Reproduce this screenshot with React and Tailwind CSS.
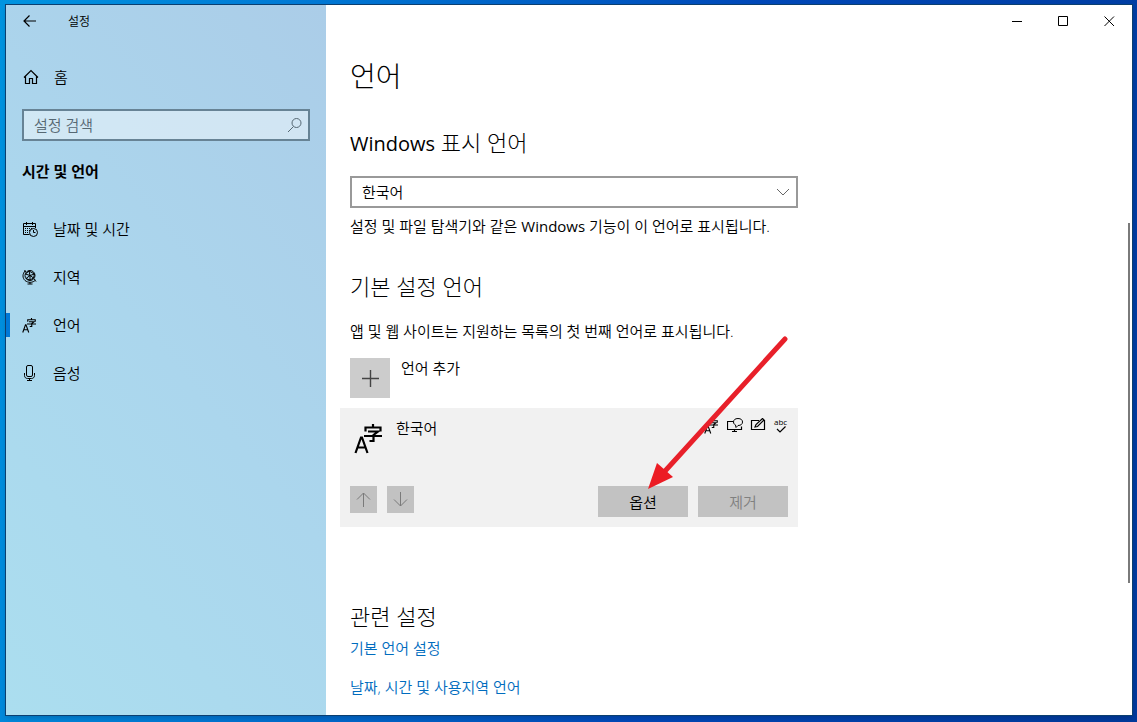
function Icon({ size, className = "", children }) {
  return (
    <svg
      width={size}
      height={size}
      viewBox={`0 0 ${size} ${size}`}
      fill="none"
      stroke="currentColor"
      strokeWidth="1"
      aria-hidden="true"
      className={`shrink-0 ${className}`}
    >
      {children}
    </svg>
  );
}

function LanguageIcon({ size, className = "" }) {
  return (
    <svg
      width={size}
      height={size}
      viewBox="0 0 32 32"
      fill="none"
      stroke="currentColor"
      strokeWidth="2.2"
      aria-hidden="true"
      className={`shrink-0 ${className}`}
    >
      <path d="M1.5 31L7 15.5H8L13.5 31M3.5 25.5H11.5" />
      <path d="M19 2V5.5M11.5 9.5V5.5H26.5V9.5M14 9.5H24L19.5 13V19H15.5M10 14H28" />
    </svg>
  );
}

function CalendarIcon() {
  return (
    <Icon size={16}>
      <path d="M7.5 13.5H1.5V2.5H13.5V7M1.5 5.5H13.5M4.5 1V4M10.5 1V4" />
      <path d="M3 7.5H11M3 9.5H8M3 11.5H7" strokeDasharray="1 1" />
      <circle cx="11.5" cy="11.5" r="4" />
      <path d="M11.5 9V11.5H13.5" />
    </Icon>
  );
}

function GlobeIcon() {
  return (
    <Icon size={16}>
      <circle cx="8" cy="6.5" r="5" />
      <path d="M3.5 1.5C0 5 .5 9 3 11.5C6 14 11 14 13.5 11M2 1.5L4 3M12 10L14 12.5M3.5 5L7 2L12.5 5L11.5 9L8 11L4 9.5L8 6.5L12.5 5M7 2L8 6.5L11.5 9M3.5 5L8 6.5L8 11M8 13V15M5.5 15H10.5" />
    </Icon>
  );
}

function MicIcon() {
  return (
    <Icon size={16}>
      <rect x="4.5" y=".5" width="6" height="11" rx="1.5" />
      <path d="M2.5 8V10.5C2.5 12.5 4 13.5 5.5 13.5H9.5C11 13.5 12.5 12.5 12.5 10.5V8M7.5 13.5V15.5M5 15.5H10" />
    </Icon>
  );
}

const navItems = [
  { label: "날짜 및 시간", icon: <CalendarIcon /> },
  { label: "지역", icon: <GlobeIcon /> },
  { label: "언어", icon: <LanguageIcon size={16} />, active: true },
  { label: "음성", icon: <MicIcon /> },
];

function Sidebar() {
  return (
    <aside className="flex w-80 shrink-0 flex-col bg-linear-[50deg,#abdeef_0%,#abd6ed_50%,#abcde8_100%]">
      <div className="flex h-8 items-center gap-[30px] pl-4">
        <button type="button" aria-label="뒤로" className="flex">
          <Icon size={16}>
            <path d="M14 8H2.5M7.5 2.5L2 8L7.5 13.5" strokeWidth="1.2" />
          </Icon>
        </button>
        <span className="pt-px text-xs">설정</span>
      </div>

      <a href="#home" className="mt-4 flex h-12 items-center gap-[15px] pl-[17px]">
        <Icon size={16}>
          <path d="M1 8.5L8 1.5L15 8.5M2.5 7.5V14.5H6.5V9.5H9.5V14.5H13.5V7.5" strokeWidth="1.2" />
        </Icon>
        <span>홈</span>
      </a>

      <div className="mx-4 mt-2 flex h-8 items-center border-2 border-[#678395] bg-white/45 pr-[5px] pl-[10px]">
        <input
          type="search"
          aria-label="설정 검색"
          placeholder="설정 검색"
          className="min-w-0 flex-1 bg-transparent outline-none placeholder:text-[#566873]"
        />
        <Icon size={16} className="text-[#566873]">
          <circle cx="9.5" cy="6" r="4.5" />
          <path d="M6.5 9.5L1 15" />
        </Icon>
      </div>

      <h2 className="mt-5 pl-4 font-bold">시간 및 언어</h2>

      <nav className="mt-6 flex flex-col">
        {navItems.map((item) => (
          <a key={item.label} href={`#${item.label}`} className="flex h-12 items-center">
            <span className={item.active ? "h-6 w-1 bg-[#0078d7]" : "h-6 w-1"} />
            <span className="ml-3 flex">{item.icon}</span>
            <span className="ml-[15px]">{item.label}</span>
          </a>
        ))}
      </nav>
    </aside>
  );
}

function WindowControls() {
  return (
    <div className="flex h-8 justify-end">
      <button type="button" aria-label="최소화" className="flex w-[46px] items-center justify-center">
        <Icon size={11}><path d="M0 5.5H10" /></Icon>
      </button>
      <button type="button" aria-label="최대화" className="flex w-[46px] items-center justify-center">
        <Icon size={11}><path d="M.5 .5H9.5V9.5H.5Z" /></Icon>
      </button>
      <button type="button" aria-label="닫기" className="flex w-[46px] items-center justify-center">
        <Icon size={11}><path d="M.5 .5L10 10M10 .5L.5 10" /></Icon>
      </button>
    </div>
  );
}

function FeatureIcons() {
  return (
    <div className="-mr-px flex items-center gap-[7px]">
      <LanguageIcon size={16} />
      <Icon size={16}>
        <path d="M6 3.5H.5V11.5H14.5V8.5M5 13.5H10M7.5 11.5V13.5" strokeWidth="1.2" />
        <path d="M8.5 7L9 9.5L11 7.5C14 7.5 15.5 6 15.5 4C15.5 2 14 .5 11 .5C8 .5 6.5 2 6.5 4C6.5 5.5 7.5 6.5 8.5 7Z" />
      </Icon>
      <Icon size={16}>
        <path d="M9 2.5H1.5V11.5H14.5V2.5H13M5 9L6 6.5L12.5 .5L14 2L7.5 8.5Z" strokeWidth="1.2" />
      </Icon>
      <Icon size={16} className="overflow-visible">
        <text x="1" y="7" fontSize="8" fontWeight="400" stroke="none" fill="currentColor" fontFamily="Open Sans">abc</text>
        <path d="M4 11L7 14L12.5 8.5" strokeWidth="1.2" />
      </Icon>
    </div>
  );
}

function PointerArrow() {
  return (
    <svg
      width="146"
      height="158"
      viewBox="0 0 146 158"
      aria-hidden="true"
      className="pointer-events-none absolute right-1 bottom-9"
    >
      <path d="M137 6L18 137" stroke="#e8202a" strokeWidth="5" strokeLinecap="round" />
      <path d="M0 156L9 130L25 144Z" fill="#ec1c24" />
    </svg>
  );
}

function LanguageCard() {
  return (
    <section className="relative -ml-[10px] flex max-w-[458px] flex-col gap-7 bg-[#f1f1f1] p-[10px]">
      <div className="flex items-start">
        <LanguageIcon size={32} className="mt-1 mb-1 ml-1" />
        <span className="ml-[10px] flex-1">한국어</span>
        <FeatureIcons />
      </div>
      <div className="flex items-start gap-[10px]">
        <button type="button" disabled aria-label="위로 이동" className="flex size-[27px] items-center justify-center bg-[#c2c2c2] text-[#7a7a7a]">
          <Icon size={15}><path d="M7.5 15V1M1 7.5L7.5 1L14 7.5" /></Icon>
        </button>
        <button type="button" disabled aria-label="아래로 이동" className="flex size-[27px] items-center justify-center bg-[#c2c2c2] text-[#7a7a7a]">
          <Icon size={15}><path d="M7.5 0V14M1 7.5L7.5 14L14 7.5" /></Icon>
        </button>
        <button type="button" className="ml-auto h-[31px] w-[90px] bg-[#c2c2c2]">옵션</button>
        <button type="button" disabled className="h-[31px] w-[90px] bg-[#c2c2c2] text-[#808080]">제거</button>
      </div>
      <PointerArrow />
    </section>
  );
}

function Content() {
  return (
    <main className="flex max-w-[496px] flex-col px-6 pt-[19px]">
      <h1 className="text-[28px] leading-10 font-light">언어</h1>

      <h2 className="mt-[30px] text-[22px] leading-8 font-light">
        <label htmlFor="display-language">
          <span className="text-xl font-normal">Windows</span> 표시 언어
        </label>
      </h2>
      <div className="relative mt-[18px]">
        <select
          id="display-language"
          className="h-8 w-full appearance-none border-2 border-[#999] bg-white pr-8 pl-[10px]"
        >
          <option>한국어</option>
        </select>
        <Icon size={14} className="pointer-events-none absolute top-[9px] right-2 text-[#666]">
          <path d="M1 4L7 10L13 4" />
        </Icon>
      </div>
      <p className="mt-2 whitespace-nowrap">
        설정 및 파일 탐색기와 같은 <span className="font-normal">Windows</span> 기능이 이 언어로 표시됩니다.
      </p>

      <h2 className="mt-[34px] text-[22px] leading-8 font-light">기본 설정 언어</h2>
      <p className="mt-[19px] whitespace-nowrap">앱 및 웹 사이트는 지원하는 목록의 첫 번째 언어로 표시됩니다.</p>
      <button type="button" className="mt-[17px] mb-[10px] flex items-start gap-[11px] self-start">
        <span className="flex size-10 items-center justify-center bg-[#ccc] text-[#444]">
          <Icon size={17}><path d="M8.5 0V17M0 8.5H17" strokeWidth="1.4" /></Icon>
        </span>
        <span>언어 추가</span>
      </button>

      <LanguageCard />

      <h2 className="mt-[73px] text-[22px] leading-8 font-light">관련 설정</h2>
      <a href="#default" className="mt-[6px] self-start text-[#006cbe]">기본 언어 설정</a>
      <a href="#region" className="mt-[19px] self-start text-[#006cbe]">날짜, 시간 및 사용지역 언어</a>
    </main>
  );
}

export default function App() {
  return (
    <div className="flex min-h-screen bg-linear-[100deg,#0094e0_0%,#0078d4_25%,#0048b8_60%,#003a9c_100%] pt-1 pr-1 pb-[6px] pl-[5px] font-['Open_Sans','Noto_Sans_CJK_KR',sans-serif] text-[15px] leading-5 font-[350] text-black">
      <div className="flex flex-1 border border-[#0b3f70] bg-white shadow-md">
        <Sidebar />
        <div className="flex min-w-0 flex-1 flex-col">
          <WindowControls />
          <div className="flex flex-1">
            <div className="min-w-0 flex-1">
              <Content />
            </div>
            <div className="mt-[186px] mr-[2px] h-[360px] w-[2px] bg-[#7a7a7a]" />
          </div>
        </div>
      </div>
    </div>
  );
}
